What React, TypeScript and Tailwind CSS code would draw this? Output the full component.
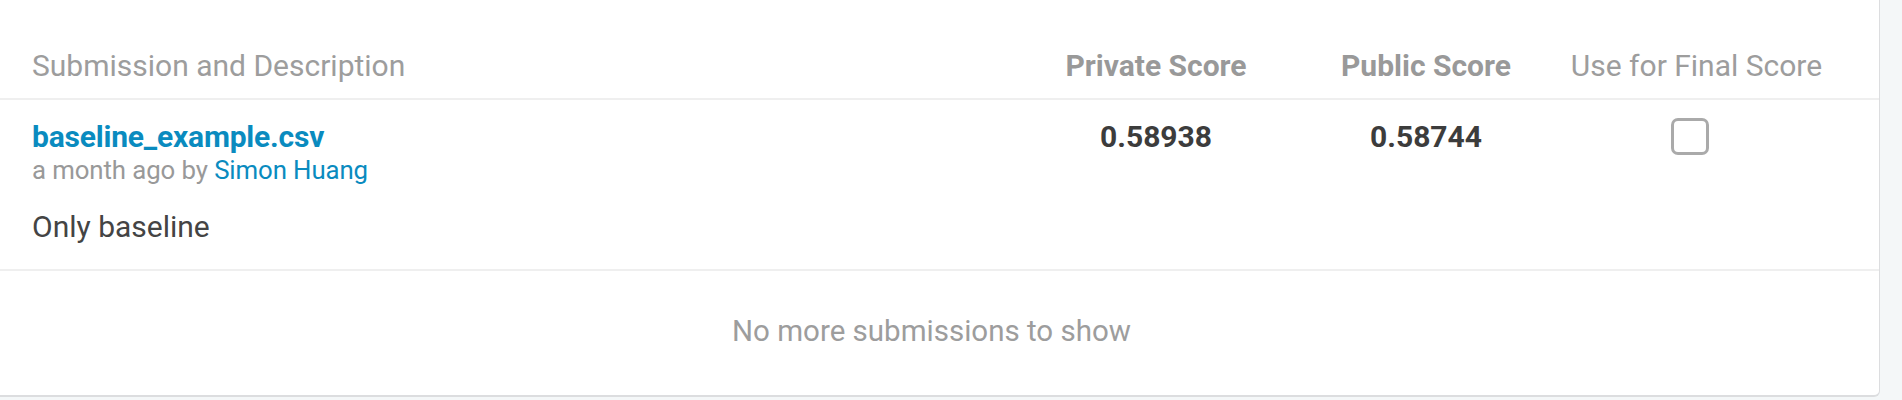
import React from "react";

const font = { fontFamily: "Roboto, 'Liberation Sans', Arial, sans-serif" };

const SubmissionsTable = () => {
  return (
    <div className="h-[400px] w-full bg-[#f4f7f8] overflow-hidden" style={font}>
      <div className="w-[1880px] h-[397px] bg-white border-r border-b-2 border-[#dcdddf] rounded-br-[6px] flex flex-col">
        {/* header row */}
        <div className="grid grid-cols-[1fr_270px_270px_271px] pl-[32px] pr-[47px] pt-[48px] pb-[14px] border-b-2 border-[#efefef] text-[30px] leading-[36px] text-[#9d9d9d]">
          <div className="font-normal">Submission and Description</div>
          <div className="text-center font-bold text-[#999]">Private Score</div>
          <div className="text-center font-bold text-[#999]">Public Score</div>
          <div className="text-center font-normal">Use for Final Score</div>
        </div>

        {/* submission row */}
        <div className="grid grid-cols-[1fr_270px_270px_271px] pl-[32px] pr-[47px] pt-[19px] pb-[24px] border-b-2 border-[#efefef]">
          <div>
            <a className="block text-[30px] leading-[36px] font-bold text-[#0a8bbf] tracking-[-0.2px]">
              baseline_example.csv
            </a>
            <div className="text-[25.8px] leading-[30px] text-[#999] tracking-[-0.1px]">
              a month ago by <span className="text-[#0a8bbf]">Simon Huang</span>
            </div>
            <div className="mt-[24px] text-[30px] leading-[36px] text-[#444]">Only baseline</div>
          </div>
          <div className="text-center text-[30px] leading-[36px] font-bold text-[#3c3c3c]">0.58938</div>
          <div className="text-center text-[30px] leading-[36px] font-bold text-[#3c3c3c]">0.58744</div>
          <div className="flex justify-center">
            <div className="mt-[-1px] mr-[14px] w-[38px] h-[37px] border-[3px] border-[#aaaaaa] rounded-[7px] bg-white"></div>
          </div>
        </div>

        {/* footer */}
        <div className="pt-[42px] text-center text-[29.5px] leading-[36px] font-normal text-[#9d9d9d] pr-[16px]">
          No more submissions to show
        </div>
      </div>
    </div>
  );
};

export default function App() {
  return <SubmissionsTable />;
}
